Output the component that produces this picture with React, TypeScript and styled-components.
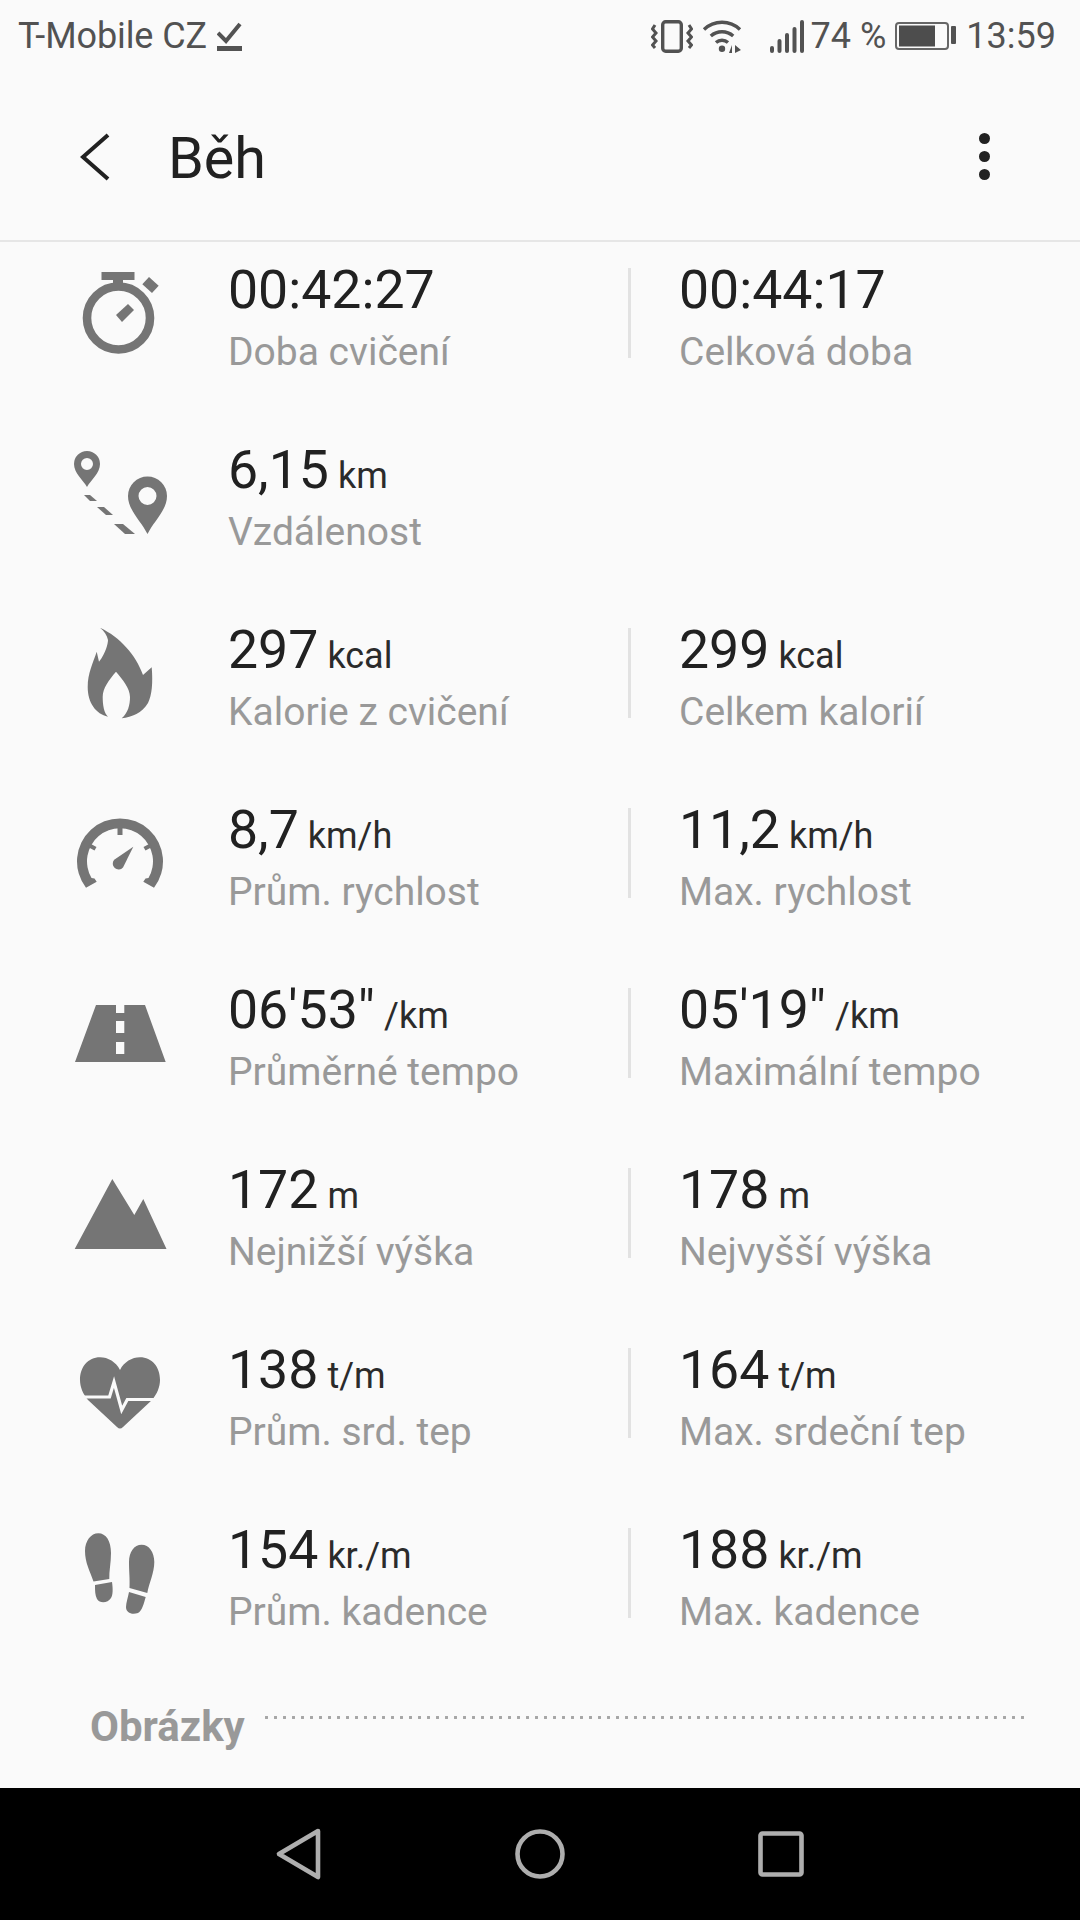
import React from 'react';
import styled, { createGlobalStyle } from 'styled-components';

const GlobalStyle = createGlobalStyle`
  html, body {
    margin: 0;
    padding: 0;
    background: #fafafa;
  }
  * {
    box-sizing: border-box;
  }
`;

const Page = styled.div`
  width: 1080px;
  height: 1920px;
  display: flex;
  flex-direction: column;
  overflow: hidden;
  background: #fafafa;
  font-family: Roboto, 'Liberation Sans', sans-serif;
`;

const StatusBar = styled.div`
  height: 72px;
  flex: none;
  display: flex;
  align-items: center;
  padding: 0 24px 0 18px;
  color: #525252;
  font-size: 36px;
  svg {
    display: block;
    flex: none;
  }
`;

const Carrier = styled.span`
  margin-right: 10px;
  letter-spacing: -0.1px;
`;

const Spacer = styled.div`
  flex: 1;
`;

const Percent = styled.span`
  margin: 0 9px 0 7px;
`;

const Clock = styled.span`
  margin-left: 10px;
`;

const Header = styled.header`
  height: 170px;
  flex: none;
  display: flex;
  align-items: center;
  padding: 4px 0 0 80px;
  border-bottom: 2px solid #e6e6e6;
  svg {
    display: block;
    margin-bottom: 2px;
  }
`;

const Title = styled.h1`
  margin: 0 0 0 58px;
  font-size: 57.5px;
  font-weight: 400;
  color: #212121;
`;

const MenuDots = styled.div`
  margin: 0 90px 4px auto;
  display: flex;
  flex-direction: column;
  gap: 7px;
  i {
    width: 11px;
    height: 11px;
    border-radius: 50%;
    background: #212121;
  }
`;

const List = styled.main`
  flex: 1;
  display: flex;
  flex-direction: column;
  gap: 90px;
  padding-top: 26px;
  overflow: hidden;
`;

const Row = styled.section`
  height: 90px;
  flex: none;
  display: grid;
  grid-template-columns: 100px 458px 1fr;
  grid-template-rows: 90px;
  padding-left: 70px;
`;

const IconBox = styled.div`
  align-self: center;
  width: 100px;
  height: 100px;
  color: #757575;
  svg {
    display: block;
  }
`;

const Stat = styled.div<{ $divided?: boolean }>`
  padding-left: ${p => (p.$divided ? '48px' : '58px')};
  border-left: ${p => (p.$divided ? '3px solid #e2e2e2' : 'none')};
  display: flex;
  flex-direction: column;
`;

const ValueLine = styled.div`
  height: 54px;
  margin-top: -5px;
  display: flex;
  align-items: baseline;
  white-space: nowrap;
  color: #212121;
  font-size: 53.6px;
  line-height: 54px;
`;

const Unit = styled.span`
  margin-left: 9px;
  font-size: 36px;
  color: #2b2b2b;
`;

const Label = styled.div`
  margin-top: 13px;
  font-size: 39px;
  line-height: 44px;
  white-space: nowrap;
  color: #999;
`;

const SectionTitle = styled.div`
  flex: none;
  display: flex;
  align-items: flex-start;
  margin-top: -4px;
  padding: 0 56px 0 90px;
`;

const SectionName = styled.span`
  font-size: 42px;
  font-weight: 700;
  line-height: 46px;
  color: #999;
`;

const DottedRule = styled.div`
  flex: 1;
  height: 3px;
  margin: 12px 0 0 17px;
  background-image: radial-gradient(circle, #a6a6a6 1.4px, transparent 1.8px);
  background-size: 9px 3px;
`;

const NavBar = styled.nav`
  height: 132px;
  flex: none;
  background: #000;
  display: flex;
  align-items: center;
  justify-content: center;
  gap: 181px;
  svg {
    display: block;
  }
`;

const StopwatchIcon = () => (
  <svg width="100" height="100" viewBox="0 0 100 100" fill="currentColor">
    <circle cx="48.5" cy="55" r="31.5" fill="none" stroke="currentColor" strokeWidth="8.6" />
    <rect x="31.5" y="9" width="33" height="8" />
    <rect x="43" y="15" width="10" height="10" />
    <rect x="74" y="17" width="13" height="10" transform="rotate(42 80.5 22)" />
    <path d="M46 52 L58 41 L64 47 L52 59 Z" />
  </svg>
);

const RouteIcon = () => (
  <svg width="100" height="100" viewBox="0 0 100 100" fill="currentColor">
    <path
      fillRule="evenodd"
      d="M17 44 C13 37 4 30 4 21 A13 13 0 0 1 30 21 C30 30 21 37 17 44 Z M17 15 A6 6 0 1 0 17 27 A6 6 0 1 0 17 15 Z"
    />
    <path
      fillRule="evenodd"
      d="M77.5 91 C71 78 58 67 58 53 A19.5 19.5 0 0 1 97 53 C97 67 84 78 77.5 91 Z M77.5 44 A9 9 0 1 0 77.5 62 A9 9 0 1 0 77.5 44 Z"
    />
    <path d="M14 52 L20 52 L27 58 L20 58 Z" />
    <path d="M27 64 L34 64 L43 72 L36 72 Z" />
    <path d="M44 81 L53 81 L65 91 L55 91 Z" />
  </svg>
);

const FlameIcon = () => (
  <svg width="100" height="100" viewBox="0 0 100 100" fill="currentColor">
    <path d="M30 4.7 C50 14 66 32 73 52 L81.7 44.3 C83 60 82 72 78 80 C72 90 62 94 51.7 95.3 C58 90 60 82 60 74 C60 65 52 56 46 48.7 C39 57 32.7 65 32.7 74 C32.7 82 34 90 38 93.7 C26 91 17.7 80 17.7 64 C17.7 50 23 40 26.7 28.7 L29 38.7 C36 30 38 20 38 17 C37 12 34 8 30 4.7 Z" />
  </svg>
);

const GaugeIcon = () => (
  <svg width="100" height="100" viewBox="0 0 100 100" fill="currentColor">
    <path d="M16 84.7 A43 43 0 1 1 84 84.7 L73.3 78.7 L75.5 75.5 L78.5 75 A33 33 0 1 0 21.5 75 L24.5 75.5 L26.7 78.7 Z" />
    <rect x="47.5" y="24" width="5" height="8" />
    <path d="M20 40.5 L26.5 44 L24.5 47.5 L18 44 Z" />
    <path d="M80 40.5 L73.5 44 L75.5 47.5 L82 44 Z" />
    <path d="M63.3 43.7 L53 64.5 A5.8 5.8 0 1 1 44.2 56.8 Z" />
  </svg>
);

const RoadIcon = () => (
  <svg width="100" height="100" viewBox="0 0 100 100" fill="currentColor">
    <path
      fillRule="evenodd"
      d="M26 22 L46 22 L46 30 L54.3 30 L54.3 22 L75 22 L95.7 79 L5 79 Z M46 38 L46 50 L54.3 50 L54.3 38 Z M46 59 L46 71 L54.3 71 L54.3 59 Z"
    />
  </svg>
);

const MountainIcon = () => (
  <svg width="100" height="100" viewBox="0 0 100 100" fill="currentColor">
    <path d="M42.3 16 L64.3 52 L73.3 36 L96.5 86 L4.7 86 Z" />
  </svg>
);

const HeartIcon = () => (
  <svg width="100" height="100" viewBox="0 0 100 100" fill="currentColor">
    <path d="M50 27 C46 19 38 14.3 30 14.3 C18 14.3 10 24 10 37 C10 44 13 51 18 57 L47 84 Q50 87 53 84 L82 57 C87 51 90 44 90 37 C90 24 82 14.3 70 14.3 C62 14.3 54 19 50 27 Z" />
    <polyline
      points="8,54 39.5,54 44,39 51.7,67 57.3,56.5 92,56.5"
      fill="none"
      stroke="#fafafa"
      strokeWidth="3.2"
    />
  </svg>
);

const FeetIcon = () => (
  <svg width="100" height="100" viewBox="0 0 100 100" fill="currentColor">
    <path d="M28.3 10.3 C36 10.3 41 18 41 30 C41 40 39 48 39.3 56 L23.5 58.5 C20 48 15 40 15 28 C15 18 21 10.3 28.3 10.3 Z" />
    <path d="M25 62 L42 59 C43 66 43 72 41 75 C38 80 30 81 27 76 C25 72 25 68 25 62 Z" />
    <path d="M71.7 21.7 C79 21.7 84.3 29 84.3 39 C84.3 50 79 60 77.3 70 L59.5 65 C60 55 59 50 59 39 C59 29 64 21.7 71.7 21.7 Z" />
    <path d="M59 69 L75.7 74 C74 80 72 88 68 90 C62 92 56 90 56 84 C56 80 58 74 59 69 Z" />
  </svg>
);

interface StatData {
  value: string;
  unit?: string;
  label: string;
}

interface RowData {
  icon: React.ReactNode;
  left: StatData;
  right?: StatData;
}

const rows: RowData[] = [
  {
    icon: <StopwatchIcon />,
    left: { value: '00:42:27', label: 'Doba cvičení' },
    right: { value: '00:44:17', label: 'Celková doba' },
  },
  {
    icon: <RouteIcon />,
    left: { value: '6,15', unit: 'km', label: 'Vzdálenost' },
  },
  {
    icon: <FlameIcon />,
    left: { value: '297', unit: 'kcal', label: 'Kalorie z cvičení' },
    right: { value: '299', unit: 'kcal', label: 'Celkem kalorií' },
  },
  {
    icon: <GaugeIcon />,
    left: { value: '8,7', unit: 'km/h', label: 'Prům. rychlost' },
    right: { value: '11,2', unit: 'km/h', label: 'Max. rychlost' },
  },
  {
    icon: <RoadIcon />,
    left: { value: `06'53"`, unit: '/km', label: 'Průměrné tempo' },
    right: { value: `05'19"`, unit: '/km', label: 'Maximální tempo' },
  },
  {
    icon: <MountainIcon />,
    left: { value: '172', unit: 'm', label: 'Nejnižší výška' },
    right: { value: '178', unit: 'm', label: 'Nejvyšší výška' },
  },
  {
    icon: <HeartIcon />,
    left: { value: '138', unit: 't/m', label: 'Prům. srd. tep' },
    right: { value: '164', unit: 't/m', label: 'Max. srdeční tep' },
  },
  {
    icon: <FeetIcon />,
    left: { value: '154', unit: 'kr./m', label: 'Prům. kadence' },
    right: { value: '188', unit: 'kr./m', label: 'Max. kadence' },
  },
];

const StatCell: React.FC<{ data: StatData; divided?: boolean }> = ({ data, divided }) => (
  <Stat $divided={divided}>
    <ValueLine>
      {data.value}
      {data.unit && <Unit>{data.unit}</Unit>}
    </ValueLine>
    <Label>{data.label}</Label>
  </Stat>
);

const VibrateIcon = styled.svg`
  margin-right: 9px;
`;

const WifiIcon = styled.svg`
  margin-right: 28px;
`;

const StatusBarIcons = () => (
  <>
    <VibrateIcon width="42" height="33" viewBox="0 0 42 33">
      <rect x="11.7" y="1.7" width="18.6" height="29.6" rx="3" fill="none" stroke="#525252" strokeWidth="3.4" />
      <path
        d="M4 5 L1.5 9 L5 13 L1.5 17 L5 21 L1.5 25 L4 28 M38 5 L40.5 9 L37 13 L40.5 17 L37 21 L40.5 25 L38 28"
        fill="none"
        stroke="#525252"
        strokeWidth="3"
      />
    </VibrateIcon>
    <WifiIcon width="40" height="33" viewBox="0 0 40 33">
      <g fill="none" stroke="#525252" strokeWidth="3.4">
        <path d="M2 9.5 A26 26 0 0 1 38 9.5" />
        <path d="M8.8 16 A17 17 0 0 1 31.2 16" />
        <path d="M14 22.5 A9 9 0 0 1 26 22.5" />
      </g>
      <circle cx="20" cy="28.7" r="3.2" fill="#525252" />
      <path d="M30 33 L30 25 L27 33 Z M33 25 L33 33 L39 30 Z" fill="#525252" />
    </WifiIcon>
    <svg width="34" height="33" viewBox="0 0 34 33">
      <g fill="none" stroke="#525252" strokeWidth="4" strokeLinecap="round">
        <path d="M2 28 V31" />
        <path d="M9.5 21 V31" />
        <path d="M17 15 V31" />
        <path d="M24.5 9 V31" />
        <path d="M32 2 V31" />
      </g>
    </svg>
  </>
);

const BatteryIcon = () => (
  <svg width="61" height="28" viewBox="0 0 61 28">
    <rect x="1" y="1" width="52" height="26" rx="3" fill="none" stroke="#666" strokeWidth="2" />
    <rect x="4" y="3.5" width="36" height="21" fill="#4d4d4d" />
    <rect x="56" y="4" width="5" height="18" rx="1" fill="#525252" />
  </svg>
);

const App: React.FC = () => {
  return (
    <Page>
      <GlobalStyle />
      <StatusBar>
        <Carrier>T-Mobile CZ</Carrier>
        <svg width="25" height="29" viewBox="0 0 25 29">
          <rect x="0" y="24" width="25" height="5" fill="#525252" />
          <polyline points="1,11 9,19 23,2" fill="none" stroke="#525252" strokeWidth="4" />
        </svg>
        <Spacer />
        <StatusBarIcons />
        <Percent>74 %</Percent>
        <BatteryIcon />
        <Clock>13:59</Clock>
      </StatusBar>
      <Header>
        <svg width="30" height="48" viewBox="0 0 30 48">
          <polyline points="28,2 3,24 28,46" fill="none" stroke="#212121" strokeWidth="4" />
        </svg>
        <Title>Běh</Title>
        <MenuDots>
          <i />
          <i />
          <i />
        </MenuDots>
      </Header>
      <List>
        {rows.map(row => (
          <Row key={row.left.label}>
            <IconBox>{row.icon}</IconBox>
            <StatCell data={row.left} />
            {row.right && <StatCell data={row.right} divided />}
          </Row>
        ))}
        <SectionTitle>
          <SectionName>Obrázky</SectionName>
          <DottedRule />
        </SectionTitle>
      </List>
      <NavBar>
        <svg width="60" height="60" viewBox="0 0 60 60">
          <path
            d="M49 7 L10 30 L49 53 Z"
            fill="none"
            stroke="#aeaeae"
            strokeWidth="4.6"
            strokeLinejoin="round"
          />
        </svg>
        <svg width="60" height="60" viewBox="0 0 60 60">
          <circle cx="30" cy="30" r="22.5" fill="none" stroke="#aeaeae" strokeWidth="4.6" />
        </svg>
        <svg width="60" height="60" viewBox="0 0 60 60">
          <rect x="9.5" y="9.5" width="41" height="41" rx="2" fill="none" stroke="#aeaeae" strokeWidth="4.6" />
        </svg>
      </NavBar>
    </Page>
  );
};

export default App;
